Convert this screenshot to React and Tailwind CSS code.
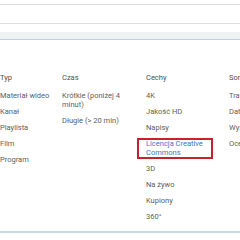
const columns = [
  { title: "Typ", items: ["Materiał wideo", "Kanał", "Playlista", "Film", "Program"] },
  { title: "Czas", items: ["Krótkie (poniżej 4 minut)", "Długie (> 20 min)"] },
  {
    title: "Cechy",
    items: ["4K", "Jakość HD", "Napisy", "Licencja Creative Commons", "3D", "Na żywo", "Kupiony", "360°"],
  },
  { title: "Sortuj według", items: ["Trafność", "Data przesłania", "Wyświetlenia", "Ocena"] },
];

const App = () => {
  return (
    <div className="w-[240px] h-[240px] overflow-hidden bg-white font-['Roboto',sans-serif]">
      <div className="h-[4px]" />
      <div className="h-[20px] border-y border-[#dedede]" />
      <div className="h-[8px]" />
      <div className="h-[8px] bg-[#eef2f3] border-b border-[#c6cbee]" />
      <div className="h-[193px] pt-[33px] border-b-2 border-[#c8d6de]">
        <div className="grid grid-cols-[62px_84px_83px_120px] w-[349px] text-[7.5px] leading-[9px] text-[#606060]">
          {columns.map((col) => (
            <div key={col.title} className="flex flex-col">
              <p className="mb-[9px] text-[#505050]">{col.title}</p>
              <ul className="flex flex-col gap-[7px]">
                {col.items.map((item) =>
                  item === "Licencja Creative Commons" ? (
                    <li key={item} className="relative text-[#3f74c8] pr-[12px]">
                      {item}
                      <span className="absolute -left-[9px] -top-[1px] w-[76px] h-[21px] border-2 border-[#c8202e]" />
                    </li>
                  ) : (
                    <li key={item} className="pr-[12px]">{item}</li>
                  )
                )}
              </ul>
            </div>
          ))}
        </div>
      </div>
    </div>
  );
};

export default App;
